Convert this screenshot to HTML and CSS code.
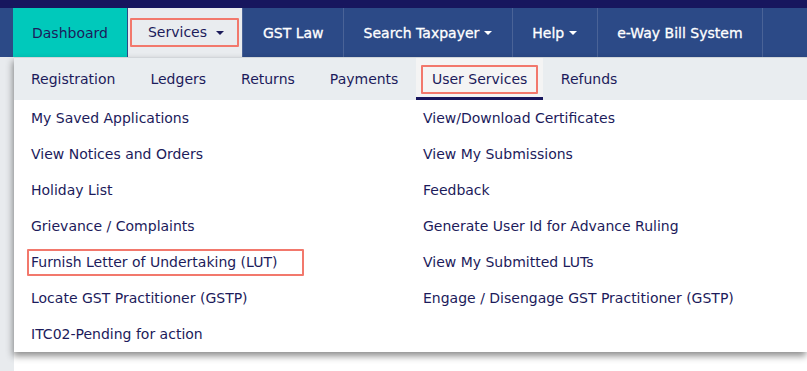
FILE: index.html
```html
<!DOCTYPE html>
<html lang="en">
<head>
    <meta charset="UTF-8">
    <meta name="viewport" content="width=device-width, initial-scale=1.0">
    <title>GST Services</title>
    <link rel="stylesheet" href="styles.css">
</head>
<body>
    <div class="top-band"></div>
    <nav class="main-nav">
        <a class="nav-item dashboard">Dashboard</a>
        <a class="nav-item services"><span class="marked">Services <span class="caret"></span></span></a>
        <a class="nav-item">GST Law</a>
        <a class="nav-item">Search Taxpayer <span class="caret"></span></a>
        <a class="nav-item">Help <span class="caret"></span></a>
        <a class="nav-item">e-Way Bill System</a>
    </nav>

    <div class="page">
        <div class="gutter"></div>
        <div class="dropdown">
            <div class="sub-nav">
                <a class="sub-item">Registration</a>
                <a class="sub-item">Ledgers</a>
                <a class="sub-item">Returns</a>
                <a class="sub-item">Payments</a>
                <a class="sub-item active"><span class="marked">User Services</span></a>
                <a class="sub-item">Refunds</a>
            </div>
            <div class="links">
                <a class="link">My Saved Applications</a>
                <a class="link">View/Download Certificates</a>
                <a class="link">View Notices and Orders</a>
                <a class="link">View My Submissions</a>
                <a class="link">Holiday List</a>
                <a class="link">Feedback</a>
                <a class="link">Grievance / Complaints</a>
                <a class="link">Generate User Id for Advance Ruling</a>
                <a class="link"><span class="marked lut">Furnish Letter of Undertaking (LUT)</span></a>
                <a class="link">View My Submitted LUTs</a>
                <a class="link">Locate GST Practitioner (GSTP)</a>
                <a class="link">Engage / Disengage GST Practitioner (GSTP)</a>
                <a class="link">ITC02-Pending for action</a>
            </div>
        </div>
    </div>
</body>
</html>
```

FILE: styles.css
```css
body {
    margin: 0;
    background-color: #fff;
    color: #1c1b5b;
    font-family: "DejaVu Sans", Verdana, sans-serif;
    font-size: 14px;
}

.top-band {
    height: 8px;
    background-color: #17165e;
}

.main-nav {
    display: flex;
    height: 49px;
    padding-left: 13px;
    background-color: #2c4a87;
}

.nav-item {
    display: flex;
    align-items: center;
    padding: 0 19.5px;
    border-right: 1px solid #4a6397;
    color: #fff;
    white-space: nowrap;
    -webkit-text-stroke: 0.3px #fff;
}

.nav-item.dashboard {
    padding: 0 19px;
    background-color: #00c9bb;
    color: #1c1b5b;
    border-right: 1px solid #2c4a87;
    -webkit-text-stroke: 0;
}

.nav-item.services {
    padding: 0 3px 0 2px;
    background-color: #e9ecef;
    color: #1c1b5b;
    -webkit-text-stroke: 0;
}

.nav-item.services .marked {
    padding: 4px 13px 5px 16px;
}

.caret {
    display: inline-block;
    margin-left: 5px;
    vertical-align: middle;
    border-top: 4px solid currentColor;
    border-left: 4px solid transparent;
    border-right: 4px solid transparent;
}

.marked {
    border: 2px solid #f2786c;
    border-radius: 1px;
}

.page {
    display: flex;
    height: 314px;
}

.gutter {
    width: 14px;
    background-color: #e8ebee;
}

.dropdown {
    flex: 1;
    align-self: flex-start;
    background-color: #fff;
    box-shadow: -1px 4px 7px rgba(0, 0, 0, 0.45);
}

.sub-nav {
    display: flex;
    height: 43px;
    background-color: #e9edf0;
    border-top: 1px solid #d2d6da;
    box-sizing: border-box;
}

.sub-item {
    display: flex;
    align-items: center;
    padding: 0 17.5px;
    white-space: nowrap;
}

.sub-item:first-child {
    padding-left: 17px;
}

.sub-item.active {
    padding: 0 5px;
    background-color: #f4f4f4;
    border-bottom: 3px solid #17165e;
}

.sub-item.active .marked {
    padding: 4px 9px 5px 9px;
    margin-top: 3px;
}

.links {
    display: grid;
    grid-template-columns: 392px 1fr;
    grid-auto-rows: 36px;
    padding-left: 17px;
}

.link {
    display: flex;
    align-items: center;
    white-space: nowrap;
}

.marked.lut {
    margin-left: -4px;
    padding: 3px 25px 4px 2px;
}
```
